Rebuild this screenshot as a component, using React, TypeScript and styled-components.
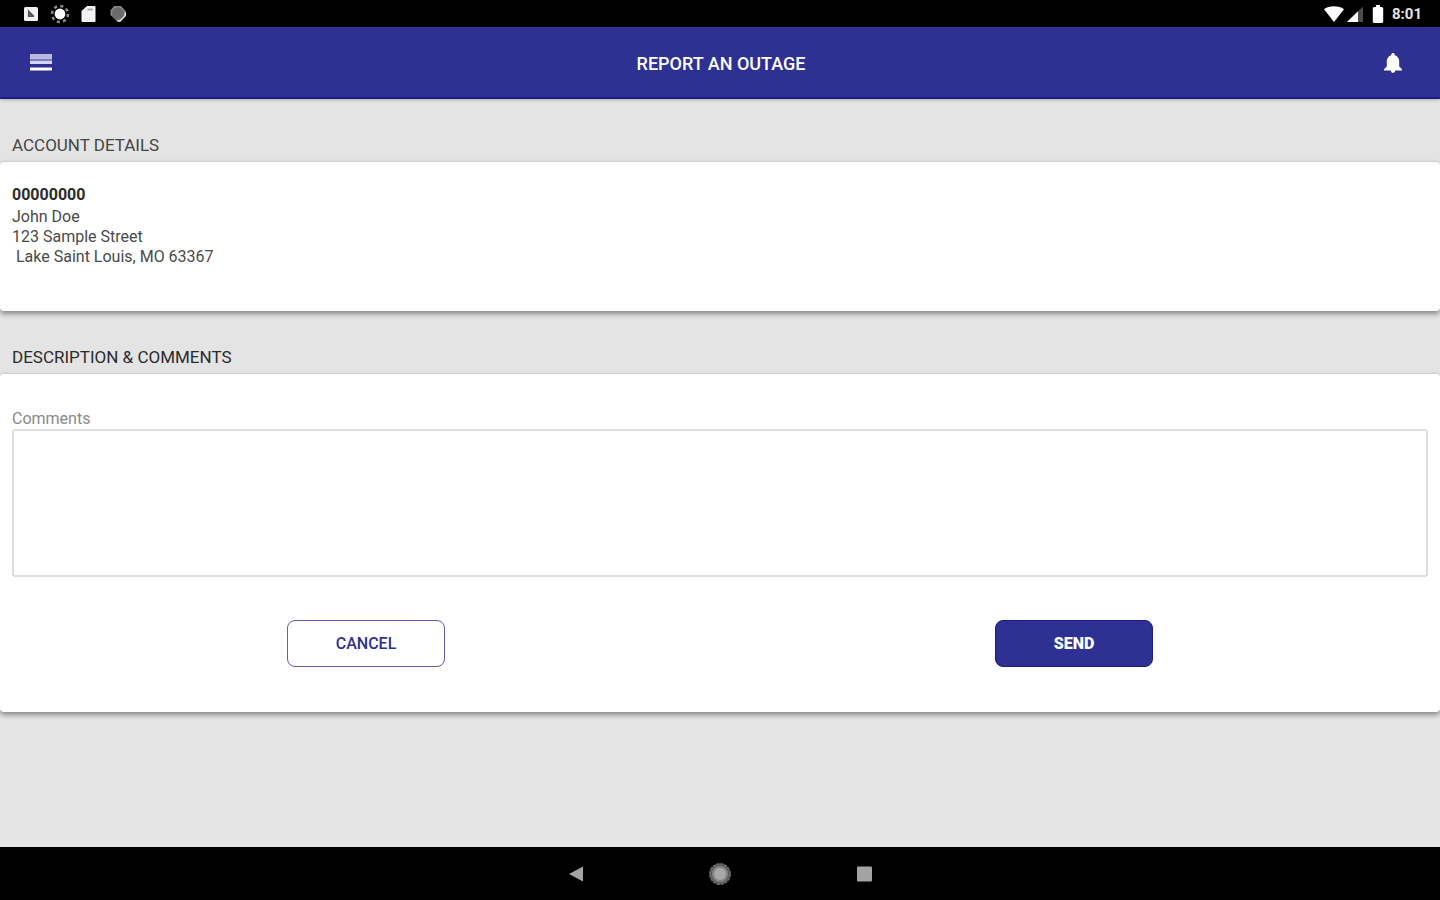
import React from "react";
import styled, { createGlobalStyle } from "styled-components";

const indigo = "#2e3192";
const indigoEdge = "#1d1b86";

const GlobalStyle = createGlobalStyle`
  *, *::before, *::after { box-sizing: border-box; }
  body {
    margin: 0;
    background: #e4e4e4;
    font-family: Roboto, "Liberation Sans", sans-serif;
    color: #3c3c3c;
  }
`;

const Screen = styled.div`
  display: flex;
  flex-direction: column;
  min-height: 100vh;
`;

const StatusBar = styled.div`
  display: flex;
  align-items: center;
  justify-content: space-between;
  height: 27px;
  padding: 0 18px 0 21px;
  background: #000;
  color: #fff;
`;

const StatusGroup = styled.div<{ $gap: number }>`
  display: flex;
  align-items: center;
  gap: ${(p) => p.$gap}px;
`;

const Clock = styled.time`
  font-size: 15px;
  line-height: 20px;
  font-weight: 700;
  color: #e4e4e4;
`;

const AppBar = styled.header`
  display: grid;
  grid-template-columns: 48px 1fr 48px;
  align-items: center;
  height: 72px;
  padding: 2px 23px 0 17px;
  background: ${indigo};
  border-bottom: 2px solid ${indigoEdge};
  box-shadow: 0 1px 3px rgba(0, 0, 0, 0.25);
  color: #fff;
`;

const AppTitle = styled.h1`
  margin: 0;
  padding: 2px 0 0 8px;
  text-align: center;
  font-size: 18px;
  line-height: 24px;
  font-weight: 500;
`;

const IconButton = styled.button`
  display: flex;
  align-items: center;
  justify-content: center;
  height: 48px;
  padding: 0;
  border: 0;
  background: none;
  color: inherit;
  cursor: pointer;
`;

const Main = styled.main`
  flex: 1;
`;

const SectionTitle = styled.h2<{ $dark?: boolean }>`
  margin: 0;
  padding: 34px 12px 4px;
  font-size: 17px;
  line-height: 24px;
  font-weight: 400;
  color: ${(p) => (p.$dark ? "#2b2b2b" : "#444")};
`;

const Card = styled.div<{ $space: string }>`
  padding: ${(p) => p.$space};
  border-top: 1px solid #d2d2d2;
  border-radius: 4px;
  background: #fff;
  box-shadow: 0 3px 5px rgba(0, 0, 0, 0.4);
`;

const Account = styled.address`
  font-style: normal;
  font-size: 16px;
  line-height: 20px;
  white-space: pre;
`;

const AccountLine = styled.div<{ $strong?: boolean }>`
  margin-bottom: ${(p) => (p.$strong ? 2 : 0)}px;
  font-weight: ${(p) => (p.$strong ? 700 : 400)};
  color: ${(p) => (p.$strong ? "#2b2b2b" : "#4a4a4a")};
`;

const FieldLabel = styled.label`
  display: block;
  font-size: 16px;
  line-height: 20px;
  color: #8a8a8a;
`;

const CommentBox = styled.textarea`
  display: block;
  width: 100%;
  height: 148px;
  padding: 12px;
  border: 2px solid #dedede;
  border-radius: 3px;
  background: #fff;
  font: inherit;
  resize: none;
`;

const Actions = styled.div`
  display: grid;
  grid-template-columns: 1fr 1fr;
  justify-items: center;
  padding-top: 43px;
`;

const ActionButton = styled.button<{ $primary?: boolean }>`
  width: 158px;
  height: 47px;
  padding: 0;
  border: 1px solid ${(p) => (p.$primary ? indigoEdge : "#5f5dae")};
  border-radius: 8px;
  background: ${(p) => (p.$primary ? indigo : "#fff")};
  color: ${(p) => (p.$primary ? "#fff" : indigo)};
  font-family: inherit;
  font-size: 16px;
  line-height: 20px;
  font-weight: ${(p) => (p.$primary ? 900 : 500)};
  cursor: pointer;
`;

const NavBar = styled.nav`
  display: flex;
  align-items: center;
  justify-content: center;
  gap: 96px;
  height: 53px;
  background: #000;
  color: #a3a3a3;
`;

const NavButton = styled(IconButton)`
  width: 48px;
`;

const NotificationIcon = () => (
  <svg width="20" height="20" viewBox="0 0 20 20" aria-hidden="true">
    <rect x="3" y="3" width="14" height="14" rx="1.5" fill="#f2f2f2" />
    <path d="M7.5 7v5.5H12zM8.5 8l4.5 4.5" fill="#666" stroke="#555" strokeWidth="1.2" />
  </svg>
);

const SunIcon = () => (
  <svg width="20" height="20" viewBox="0 0 20 20" aria-hidden="true">
    <circle cx="10" cy="10" r="8" fill="none" stroke="#8c8c8c" strokeWidth="2.6" strokeDasharray="3.1 3.18" />
    <circle cx="10" cy="10" r="5.4" fill="#fff" />
  </svg>
);

const CardIcon = () => (
  <svg width="20" height="20" viewBox="0 0 20 20" aria-hidden="true">
    <path d="M8 2h7.500a1 1 0 0 1 1 1v14a1 1 0 0 1-1 1h-12a1 1 0 0 1-1-1V7z" fill="#f4f4f4" />
    <path d="M8.5 5.5H14" stroke="#aaa" strokeWidth="1.8" />
  </svg>
);

const SyncIcon = () => (
  <svg width="20" height="20" viewBox="0 0 20 20" aria-hidden="true">
    <path d="M6 2h7l5 5.5v4L12 18h-2L2.500 11V6.500z" fill="#858585" />
    <path d="M17.300 8.500v3L12 17H9.500" fill="none" stroke="#ddd" strokeWidth="1.6" />
    <circle cx="10" cy="9.200" r="6" fill="#6b6b6b" />
  </svg>
);

const WifiIcon = () => (
  <svg width="20" height="18" viewBox="0 0 20 18" aria-hidden="true">
    <path d="M0 4.2C2.800 2 6.200 1.200 10 1.200s7.200.8 10 3L10 17z" fill="#fff" />
  </svg>
);

const SignalIcon = () => (
  <svg width="18" height="18" viewBox="0 0 18 18" aria-hidden="true">
    <path d="M17 1.500V17H1z" fill="#4c4c4c" />
    <path d="M12 6.300V17H1z" fill="#fff" />
  </svg>
);

const BatteryIcon = () => (
  <svg width="12" height="20" viewBox="0 0 12 20" aria-hidden="true">
    <path d="M4 1h4v2h2l1.200 1v14l-1 1h-8.400l-1-1V4L2 3h2z" fill="#fff" />
  </svg>
);

const MenuIcon = () => (
  <svg width="22" height="22" viewBox="0 0 22 22" aria-hidden="true">
    <path d="M0 2h22v5H0z" fill="#b9b9e0" />
    <path d="M0 7h22v2H0z" fill="#7c7cc0" />
    <path d="M0 9h22v3H0z" fill="#d4d4ee" />
    <path d="M0 15.500h22v3H0z" fill="#fff" />
  </svg>
);

const BellIcon = () => (
  <svg width="20" height="22" viewBox="0 0 20 22" aria-hidden="true">
    <path
      d="M10 1c-1 0-1.700.7-1.700 1.700v.6C5.500 4 3.800 6.300 3.800 9.300v5.200L1 17.200v1.300h6.800c.2 1.400 1 2.300 2.200 2.300s2-.9 2.200-2.300H19v-1.300l-2.800-2.700V9.300c0-3-1.700-5.300-4.500-6v-.6C11.700 1.700 11 1 10 1z"
      fill="#fff"
    />
  </svg>
);

const BackIcon = () => (
  <svg width="16" height="16" viewBox="0 0 16 16" aria-hidden="true">
    <path d="M1 8 15 0.500v15z" fill="currentColor" />
  </svg>
);

const HomeIcon = () => (
  <svg width="24" height="24" viewBox="0 0 24 24" aria-hidden="true">
    <circle cx="12" cy="12" r="10" fill="#5a5a5a" stroke="#6a6a6a" strokeWidth="2" strokeDasharray="3.200 0.727" />
    <circle cx="12" cy="12" r="8" fill="#858585" />
    <circle cx="12" cy="12" r="6" fill="#a8a8a8" />
  </svg>
);

const RecentsIcon = () => (
  <svg width="16" height="16" viewBox="0 0 16 16" aria-hidden="true">
    <rect x="1" y="0.5" width="15" height="15" rx="1" fill="currentColor" />
  </svg>
);

export default function App() {
  return (
    <Screen>
      <GlobalStyle />
      <StatusBar>
        <StatusGroup $gap={9}>
          <NotificationIcon />
          <SunIcon />
          <CardIcon />
          <SyncIcon />
        </StatusGroup>
        <StatusGroup $gap={8}>
          <StatusGroup $gap={2}>
            <WifiIcon />
            <SignalIcon />
          </StatusGroup>
          <BatteryIcon />
          <Clock>8:01</Clock>
        </StatusGroup>
      </StatusBar>
      <AppBar>
        <IconButton type="button" aria-label="Menu">
          <MenuIcon />
        </IconButton>
        <AppTitle>REPORT AN OUTAGE</AppTitle>
        <IconButton type="button" aria-label="Notifications">
          <BellIcon />
        </IconButton>
      </AppBar>
      <Main>
        <section>
          <SectionTitle>ACCOUNT DETAILS</SectionTitle>
          <Card $space="23px 12px 44px">
            <Account>
              <AccountLine $strong>00000000</AccountLine>
              <AccountLine>John Doe</AccountLine>
              <AccountLine>123 Sample Street</AccountLine>
              <AccountLine> Lake Saint Louis, MO 63367</AccountLine>
            </Account>
          </Card>
        </section>
        <section>
          <SectionTitle $dark>DESCRIPTION &amp; COMMENTS</SectionTitle>
          <Card $space="35px 12px 45px">
            <FieldLabel htmlFor="comments">Comments</FieldLabel>
            <CommentBox id="comments" />
            <Actions>
              <ActionButton type="button">CANCEL</ActionButton>
              <ActionButton type="submit" $primary>
                SEND
              </ActionButton>
            </Actions>
          </Card>
        </section>
      </Main>
      <NavBar>
        <NavButton type="button" aria-label="Back">
          <BackIcon />
        </NavButton>
        <NavButton type="button" aria-label="Home">
          <HomeIcon />
        </NavButton>
        <NavButton type="button" aria-label="Recent apps">
          <RecentsIcon />
        </NavButton>
      </NavBar>
    </Screen>
  );
}
